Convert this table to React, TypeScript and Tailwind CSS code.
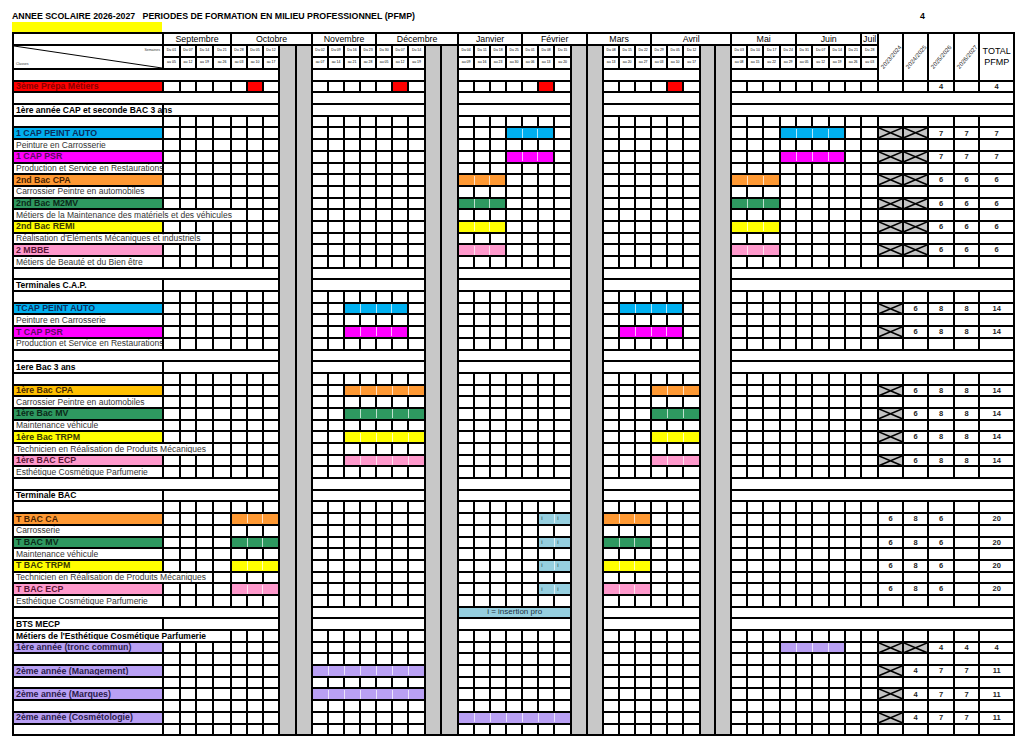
import React from "react";

type Tone =
  | "red"
  | "blue"
  | "magenta"
  | "orange"
  | "amber"
  | "green"
  | "yellow"
  | "pink"
  | "purple"
  | "info";
type Block = "A" | "B" | "C" | "D" | "E";
type Run = [number, number, Tone];

type Row =
  | { kind: "blank"; note?: string }
  | { kind: "section"; label: string }
  | {
      kind: "line";
      label?: string;
      tone?: Tone;
      bold?: boolean;
      span?: number;
      runs?: Partial<Record<Block, Run[]>>;
      years?: string[];
    };

const BG: Record<Tone, string> = {
  red: "bg-[#ff0000]",
  blue: "bg-[#00b0f0]",
  magenta: "bg-[#ff00ff]",
  orange: "bg-[#ff9933]",
  amber: "bg-[#ffc000]",
  green: "bg-[#2e9960]",
  yellow: "bg-[#ffff00]",
  pink: "bg-[#ff99cc]",
  purple: "bg-[#b9a0f4]",
  info: "bg-[#96cfdf]",
};

const INK: Record<Tone, string> = {
  red: "text-[#8a0000]",
  blue: "text-[#0a2d5c]",
  magenta: "text-[#5c0a5c]",
  orange: "text-[#4a2200]",
  amber: "text-[#4a2a00]",
  green: "text-[#0a2a18]",
  yellow: "text-[#3a3a00]",
  pink: "text-[#5a1436]",
  purple: "text-[#2a1a4a]",
  info: "text-[#1a3a48]",
};

const W: Record<number, string> = {
  15: "w-[15px]",
  16: "w-[16px]",
  17: "w-[17px]",
  18: "w-[18px]",
  25: "w-[25px]",
  26: "w-[26px]",
  35: "w-[35px]",
  150: "w-[150px]",
};

const COLS = [
  150,
  ...[17, 16, 17, 18, 16, 16, 16],
  17, 16,
  ...[16, 16, 16, 16, 16, 16, 17],
  16, 17,
  ...[16, 16, 16, 16, 16, 16, 17],
  16, 16,
  ...[16, 16, 16, 16, 16, 17],
  15, 16,
  ...[16, 16, 17, 16, 16, 17, 16, 16, 17],
  25, 25, 26, 25, 35,
];

const BLOCKS: { key: Block; du: string[]; au: string[] }[] = [
  {
    key: "A",
    du: ["01", "07", "14", "21", "28", "05", "12"],
    au: ["05", "12", "19", "26", "03", "10", "17"],
  },
  {
    key: "B",
    du: ["02", "09", "16", "23", "30", "07", "14"],
    au: ["07", "14", "21", "28", "05", "12", "19"],
  },
  {
    key: "C",
    du: ["04", "11", "18", "25", "01", "08", "15"],
    au: ["09", "16", "23", "30", "06", "13", "20"],
  },
  {
    key: "D",
    du: ["08", "15", "22", "29", "05", "12"],
    au: ["13", "20", "27", "03", "10", "17"],
  },
  {
    key: "E",
    du: ["03", "10", "17", "24", "31", "07", "14", "21", "28"],
    au: ["08", "15", "22", "29", "05", "12", "19", "26", "03"],
  },
];

const MONTHS: [string, number][] = [
  ["Septembre", 4],
  ["Octobre", 5],
  ["Novembre", 4],
  ["Décembre", 5],
  ["Janvier", 4],
  ["Février", 4],
  ["Mars", 4],
  ["Avril", 5],
  ["Mai", 4],
  ["Juin", 4],
  ["Juil", 1],
];

const YEARS = ["2023/2024", "2024/2025", "2025/2026", "2026/2027"];

const CAP1 = ["X", "X", "7", "7", "7"];
const CAP2 = ["X", "X", "6", "6", "6"];
const TCAP = ["X", "6", "8", "8", "14"];
const TBAC = ["6", "8", "6", "", "20"];
const BTS2 = ["X", "4", "7", "7", "11"];

const ROWS: Row[] = [
  { kind: "blank" },
  {
    kind: "line",
    label: "3ème Prépa Métiers",
    tone: "red",
    runs: { A: [[5, 5, "red"]], B: [[5, 5, "red"]], C: [[5, 5, "red"]], D: [[4, 4, "red"]] },
    years: ["", "", "4", "", "4"],
  },
  { kind: "blank" },
  { kind: "section", label: "1ère année CAP et seconde BAC 3 ans" },
  { kind: "line" },
  { kind: "line", label: "1 CAP PEINT AUTO", tone: "blue", runs: { C: [[3, 5, "blue"]], E: [[3, 6, "blue"]] }, years: CAP1 },
  { kind: "line", label: "Peinture en Carrosserie" },
  { kind: "line", label: "1 CAP PSR", tone: "magenta", runs: { C: [[3, 5, "magenta"]], E: [[3, 6, "magenta"]] }, years: CAP1 },
  { kind: "line", label: "Production et Service en Restaurations" },
  { kind: "line", label: "2nd Bac CPA", tone: "orange", runs: { C: [[0, 2, "orange"]], E: [[0, 2, "orange"]] }, years: CAP2 },
  { kind: "line", label: "Carrossier Peintre en automobiles" },
  { kind: "line", label: "2nd Bac M2MV", tone: "green", runs: { C: [[0, 2, "green"]], E: [[0, 2, "green"]] }, years: CAP2 },
  { kind: "line", label: "Métiers de la Maintenance des matériels et des véhicules", span: 5 },
  { kind: "line", label: "2nd Bac REMI", tone: "yellow", runs: { C: [[0, 2, "yellow"]], E: [[0, 2, "yellow"]] }, years: CAP2 },
  { kind: "line", label: "Réalisation d'Eléments Mécaniques et industriels", span: 3 },
  { kind: "line", label: "2 MBBE", tone: "pink", runs: { C: [[0, 2, "pink"]], E: [[0, 2, "pink"]] }, years: CAP2 },
  { kind: "line", label: "Métiers de Beauté et du Bien être" },
  { kind: "blank" },
  { kind: "section", label: "Terminales C.A.P." },
  { kind: "line" },
  { kind: "line", label: "TCAP PEINT AUTO", tone: "blue", runs: { B: [[2, 5, "blue"]], D: [[1, 4, "blue"]] }, years: TCAP },
  { kind: "line", label: "Peinture en Carrosserie" },
  { kind: "line", label: "T CAP PSR", tone: "magenta", runs: { B: [[2, 5, "magenta"]], D: [[1, 4, "magenta"]] }, years: TCAP },
  { kind: "line", label: "Production et Service en Restaurations" },
  { kind: "blank" },
  { kind: "section", label: "1ere Bac 3 ans" },
  { kind: "line" },
  { kind: "line", label: "1ère Bac CPA", tone: "amber", runs: { B: [[2, 6, "orange"]], D: [[3, 5, "orange"]] }, years: TCAP },
  { kind: "line", label: "Carrossier Peintre en automobiles" },
  { kind: "line", label: "1ère Bac MV", tone: "green", runs: { B: [[2, 6, "green"]], D: [[3, 5, "green"]] }, years: TCAP },
  { kind: "line", label: "Maintenance véhicule" },
  { kind: "line", label: "1ère Bac TRPM", tone: "yellow", runs: { B: [[2, 6, "yellow"]], D: [[3, 5, "yellow"]] }, years: TCAP },
  { kind: "line", label: "Technicien en Réalisation de Produits Mécaniques", span: 3 },
  { kind: "line", label: "1ère BAC ECP", tone: "pink", runs: { B: [[2, 6, "pink"]], D: [[3, 5, "pink"]] }, years: TCAP },
  { kind: "line", label: "Esthétique Cosmétique Parfumerie" },
  { kind: "blank" },
  { kind: "section", label: "Terminale BAC" },
  { kind: "line" },
  {
    kind: "line",
    label: "T BAC CA",
    tone: "orange",
    runs: { A: [[4, 6, "orange"]], C: [[5, 6, "info"]], D: [[0, 2, "orange"]] },
    years: TBAC,
  },
  { kind: "line", label: "Carrosserie" },
  {
    kind: "line",
    label: "T BAC MV",
    tone: "green",
    runs: { A: [[4, 6, "green"]], C: [[5, 6, "info"]], D: [[0, 2, "green"]] },
    years: TBAC,
  },
  { kind: "line", label: "Maintenance véhicule" },
  {
    kind: "line",
    label: "T BAC TRPM",
    tone: "yellow",
    runs: { A: [[4, 6, "yellow"]], C: [[5, 6, "info"]], D: [[0, 2, "yellow"]] },
    years: TBAC,
  },
  { kind: "line", label: "Technicien en Réalisation de Produits Mécaniques", span: 3 },
  {
    kind: "line",
    label: "T BAC ECP",
    tone: "pink",
    runs: { A: [[4, 6, "pink"]], C: [[5, 6, "info"]], D: [[0, 2, "pink"]] },
    years: TBAC,
  },
  { kind: "line", label: "Esthétique Cosmétique Parfumerie" },
  { kind: "blank", note: "i = insertion pro" },
  { kind: "section", label: "BTS MECP" },
  { kind: "line", label: "Métiers de l'Esthétique Cosmétique Parfumerie", bold: true, span: 4 },
  {
    kind: "line",
    label: "1ère année (tronc commun)",
    tone: "purple",
    runs: { E: [[3, 6, "purple"]] },
    years: ["X", "X", "4", "4", "4"],
  },
  { kind: "line" },
  { kind: "line", label: "2ème année (Management)", tone: "purple", runs: { B: [[0, 6, "purple"]] }, years: BTS2 },
  { kind: "line" },
  { kind: "line", label: "2ème année (Marques)", tone: "purple", runs: { B: [[0, 6, "purple"]] }, years: BTS2 },
  { kind: "line" },
  { kind: "line", label: "2ème année (Cosmétologie)", tone: "purple", runs: { C: [[0, 6, "purple"]] }, years: BTS2 },
  { kind: "line" },
];

const CELL = "border-2 border-black p-0";
const ROW = "h-[11.7px]";

function Fill({ tone, count }: { tone: Tone; count: number }) {
  return (
    <td colSpan={count} className={`${CELL} ${BG[tone]}`}>
      <div className="flex h-[9px]">
        {Array.from({ length: count }, (_, k) => (
          <span
            key={k}
            className={`flex-1 pl-[2px] text-[6px] leading-[9px] ${INK[tone]} ${k ? "border-l border-white/70" : ""}`}
          >
            {tone === "info" ? "i" : ""}
          </span>
        ))}
      </div>
    </td>
  );
}

function weekCells(block: Block, from: number, runs: Run[] = []) {
  const n = BLOCKS.find((b) => b.key === block)!.du.length;
  const out: React.ReactNode[] = [];
  let i = from;
  while (i < n) {
    const run = runs.find((r) => r[0] === i);
    if (run) {
      const len = run[1] - run[0] + 1;
      out.push(<Fill key={`${block}${i}`} tone={run[2]} count={len} />);
      i += len;
    } else {
      out.push(<td key={`${block}${i}`} className={CELL} />);
      i++;
    }
  }
  return out;
}

function Crossed() {
  return (
    <td className={`${CELL} relative bg-[#c4c4c4]`}>
      <svg
        className="absolute inset-0 h-full w-full"
        viewBox="0 0 100 100"
        preserveAspectRatio="none"
      >
        <path
          d="M0 0L100 100M0 100L100 0"
          stroke="#000"
          strokeWidth="1.6"
          fill="none"
          vectorEffect="non-scaling-stroke"
        />
      </svg>
    </td>
  );
}

function yearCells(years?: string[]) {
  const vals = years ?? ["", "", "", "", ""];
  return vals.map((v, k) =>
    v === "X" ? (
      <Crossed key={`y${k}`} />
    ) : (
      <td
        key={`y${k}`}
        className={`${CELL} text-center text-[7.5px] font-bold leading-none text-[#222]`}
      >
        {v}
      </td>
    ),
  );
}

function DataRow({ row, first }: { row: Row; first: boolean }) {
  if (row.kind === "blank") {
    return (
      <tr className={ROW}>
        <td colSpan={8} className={CELL} />
        <td colSpan={7} className={CELL} />
        {row.note ? (
          <td
            colSpan={7}
            className={`${CELL} bg-[#96cfdf] text-center text-[8px] leading-none text-[#1a3040]`}
          >
            {row.note}
          </td>
        ) : (
          <td colSpan={7} className={CELL} />
        )}
        <td colSpan={6} className={CELL} />
        <td colSpan={first ? 9 : 14} className={CELL} />
      </tr>
    );
  }

  if (row.kind === "section") {
    return (
      <tr className={ROW}>
        <td className={`${CELL} text-[8.5px] font-bold leading-none`}>
          <div className="whitespace-nowrap pl-[2px]">{row.label}</div>
        </td>
        <td colSpan={7} className={CELL} />
        <td colSpan={7} className={CELL} />
        <td colSpan={7} className={CELL} />
        <td colSpan={6} className={CELL} />
        <td colSpan={14} className={CELL} />
      </tr>
    );
  }

  const span = row.span ?? 0;
  const look = row.tone
    ? `${BG[row.tone]} ${INK[row.tone]} font-bold text-[8.8px]`
    : row.bold
      ? "font-bold text-black text-[8.5px]"
      : "text-[#333] text-[8.5px]";

  return (
    <tr className={ROW}>
      <td colSpan={1 + span} className={`${CELL} ${look} leading-none`}>
        <div className="overflow-hidden whitespace-nowrap pl-[2px]">{row.label}</div>
      </td>
      {weekCells("A", span, row.runs?.A)}
      {weekCells("B", 0, row.runs?.B)}
      {weekCells("C", 0, row.runs?.C)}
      {weekCells("D", 0, row.runs?.D)}
      {weekCells("E", 0, row.runs?.E)}
      {yearCells(row.years)}
    </tr>
  );
}

function GrayPair({ rows }: { rows: number }) {
  return (
    <>
      <td rowSpan={rows} className={`${CELL} bg-[#c8c8c8]`} />
      <td rowSpan={rows} className={`${CELL} bg-[#c8c8c8]`} />
    </>
  );
}

export default function App() {
  const grayRows = ROWS.length + 2;

  return (
    <div className="h-[744px] w-[1024px] bg-white pl-[12px] pt-[11px] font-['Liberation_Sans',Arial,sans-serif] text-black">
      <div className="flex h-[11px] w-[1001px] items-center text-[8.8px] font-bold leading-none">
        <span className="whitespace-pre">
          ANNEE SCOLAIRE 2026-2027   PERIODES DE FORMATION EN MILIEU PROFESSIONNEL (PFMP)
        </span>
        <span className="ml-auto mr-[88px]">4</span>
      </div>
      <div className="h-[10px] w-[150px] bg-[#ffff00]" />

      <table className="w-[1001px] table-fixed border-collapse">
        <colgroup>
          {COLS.map((w, i) => (
            <col key={i} className={W[w]} />
          ))}
        </colgroup>
        <tbody>
          <tr className="h-[12px]">
            <td className={CELL} />
            {MONTHS.map(([m, n]) => (
              <td key={m} colSpan={n} className={`${CELL} text-center text-[8.8px] leading-none`}>
                {m}
              </td>
            ))}
            {YEARS.map((y) => (
              <td key={y} rowSpan={4} className={CELL}>
                <div className="flex justify-center">
                  <span className="block -rotate-[50deg] whitespace-nowrap text-[6px] leading-none text-[#222]">
                    {y}
                  </span>
                </div>
              </td>
            ))}
            <td rowSpan={4} className={`${CELL} text-center text-[9px] leading-[11px]`}>
              TOTAL
              <br />
              PFMP
            </td>
          </tr>

          <tr className="h-[12px]">
            <td rowSpan={2} className={`${CELL} relative`}>
              <svg
                className="absolute inset-0 h-full w-full"
                viewBox="0 0 100 100"
                preserveAspectRatio="none"
              >
                <path
                  d="M0 0L100 100"
                  stroke="#000"
                  strokeWidth="1"
                  fill="none"
                  vectorEffect="non-scaling-stroke"
                />
              </svg>
              <div className="flex h-[21px] flex-col justify-between px-[2px] text-[3.5px] leading-none text-[#333]">
                <span className="self-end pt-[2px]">Semaines</span>
                <span className="pb-[1px]">Classes</span>
              </div>
            </td>
            {BLOCKS.map((b, bi) => (
              <React.Fragment key={b.key}>
                {b.du.map((d, i) => (
                  <td key={i} className={`${CELL} text-center text-[3.5px] leading-none`}>
                    Du {d}
                  </td>
                ))}
                {bi < 4 && <GrayPair rows={grayRows} />}
              </React.Fragment>
            ))}
          </tr>

          <tr className="h-[12px]">
            {BLOCKS.map((b) => (
              <React.Fragment key={b.key}>
                {b.au.map((d, i) => (
                  <td key={i} className={`${CELL} text-center text-[3.5px] leading-none`}>
                    au {d}
                  </td>
                ))}
              </React.Fragment>
            ))}
          </tr>

          {ROWS.map((row, i) => (
            <DataRow key={i} row={row} first={i === 0} />
          ))}
        </tbody>
      </table>
    </div>
  );
}
